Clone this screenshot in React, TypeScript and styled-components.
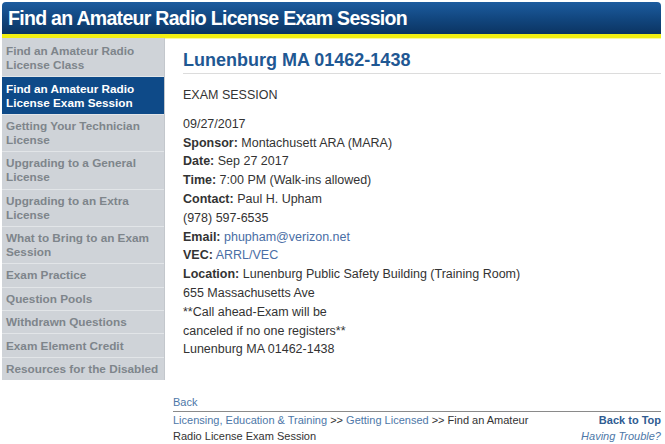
import styled, { createGlobalStyle } from 'styled-components'

const GlobalStyle = createGlobalStyle`
  html, body {
    margin: 0;
    padding: 0;
    background: #ffffff;
  }
  body {
    font-family: 'Liberation Sans', Arial, sans-serif;
    color: #333333;
  }
`

const Page = styled.div`
  width: 665px;
  box-sizing: border-box;
  padding: 2px 4px 0 2px;
`

const Header = styled.header`
  height: 32px;
  display: flex;
  align-items: center;
  padding: 0 6px;
  border-radius: 4px 4px 0 0;
  background: linear-gradient(to bottom, #1c5c9f 0%, #124780 50%, #0b3462 100%);
  border-bottom: 4px solid #f2ef12;
  box-shadow: 0 1px 0 #fbf9a0;
`

const HeaderTitle = styled.h1`
  margin: 0;
  color: #ffffff;
  font-size: 19.5px;
  font-weight: bold;
  letter-spacing: -0.7px;
`

const Main = styled.div`
  display: grid;
  grid-template-columns: 163px 1fr;
  align-items: start;
`

const Sidebar = styled.nav`
  display: flex;
  flex-direction: column;
  background: #cfd3d8;
  padding-top: 2px;
  border-right: 1px solid #c3c7cc;
`

const NavItem = styled.a<{ $active?: boolean }>`
  display: block;
  padding: 4.2px 4px;
  font-size: 11.75px;
  line-height: 14px;
  font-weight: bold;
  text-decoration: none;
  color: ${(p) => (p.$active ? '#ffffff' : '#7e858b')};
  background: ${(p) => (p.$active ? '#0e4a88' : 'transparent')};
  border-bottom: 1px solid #e2e5e8;
  &:last-child {
    border-bottom: none;
  }
`

const Content = styled.section`
  padding: 11px 0 0 18px;
  font-size: 12.5px;
  line-height: 18.8px;
`

const PlaceTitle = styled.h2`
  margin: 0;
  padding-bottom: 2px;
  font-size: 18px;
  line-height: 22px;
  color: #1f5893;
  border-bottom: 1px solid #dcdcdc;
`

const SessionLabel = styled.p`
  margin: 12px 0 0;
`

const Details = styled.div`
  margin-top: 10px;
`

const Line = styled.div``

const Label = styled.strong`
  font-weight: bold;
`

const Link = styled.a`
  color: #4a6ea5;
  text-decoration: none;
`

const Footer = styled.footer`
  margin: 14px 0 0 171px;
  font-size: 11px;
  line-height: 16px;
`

const BackLink = styled.a`
  display: block;
  color: #4d77a8;
  text-decoration: none;
  padding-bottom: 1px;
  border-bottom: 1px solid #8a8a8a;
`

const FooterRow = styled.div`
  display: flex;
  justify-content: space-between;
  align-items: flex-start;
`

const Crumbs = styled.p`
  margin: 0;
  width: 356px;
  color: #333333;
`

const CrumbLink = styled.a`
  color: #4d77a8;
  text-decoration: none;
`

const Help = styled.div`
  display: flex;
  flex-direction: column;
  align-items: flex-end;
`

const TopLink = styled.a`
  color: #2f5c92;
  font-weight: bold;
  text-decoration: none;
`

const Trouble = styled.em`
  color: #4d77a8;
`

const navItems = [
  'Find an Amateur Radio License Class',
  'Find an Amateur Radio License Exam Session',
  'Getting Your Technician License',
  'Upgrading to a General License',
  'Upgrading to an Extra License',
  'What to Bring to an Exam Session',
  'Exam Practice',
  'Question Pools',
  'Withdrawn Questions',
  'Exam Element Credit',
  'Resources for the Disabled',
]

export default function App() {
  return (
    <Page>
      <GlobalStyle />
      <Header>
        <HeaderTitle>Find an Amateur Radio License Exam Session</HeaderTitle>
      </Header>
      <Main>
        <Sidebar>
          {navItems.map((item, i) => (
            <NavItem key={item} href="#" $active={i === 1}>
              {item}
            </NavItem>
          ))}
        </Sidebar>
        <Content>
          <PlaceTitle>Lunenburg MA 01462-1438</PlaceTitle>
          <SessionLabel>EXAM SESSION</SessionLabel>
          <Details>
            <Line>09/27/2017</Line>
            <Line>
              <Label>Sponsor:</Label> Montachusett ARA (MARA)
            </Line>
            <Line>
              <Label>Date:</Label> Sep 27 2017
            </Line>
            <Line>
              <Label>Time:</Label> 7:00 PM (Walk-ins allowed)
            </Line>
            <Line>
              <Label>Contact:</Label> Paul H. Upham
            </Line>
            <Line>(978) 597-6535</Line>
            <Line>
              <Label>Email:</Label> <Link href="#">phupham@verizon.net</Link>
            </Line>
            <Line>
              <Label>VEC:</Label> <Link href="#">ARRL/VEC</Link>
            </Line>
            <Line>
              <Label>Location:</Label> Lunenburg Public Safety Building (Training Room)
            </Line>
            <Line>655 Massachusetts Ave</Line>
            <Line>**Call ahead-Exam will be</Line>
            <Line>canceled if no one registers**</Line>
            <Line>Lunenburg MA 01462-1438</Line>
          </Details>
        </Content>
      </Main>
      <Footer>
        <BackLink href="#">Back</BackLink>
        <FooterRow>
          <Crumbs>
            <CrumbLink href="#">Licensing, Education &amp; Training</CrumbLink> &gt;&gt;{' '}
            <CrumbLink href="#">Getting Licensed</CrumbLink> &gt;&gt; Find an Amateur Radio
            License Exam Session
          </Crumbs>
          <Help>
            <TopLink href="#">Back to Top</TopLink>
            <Trouble>Having Trouble?</Trouble>
          </Help>
        </FooterRow>
      </Footer>
    </Page>
  )
}
